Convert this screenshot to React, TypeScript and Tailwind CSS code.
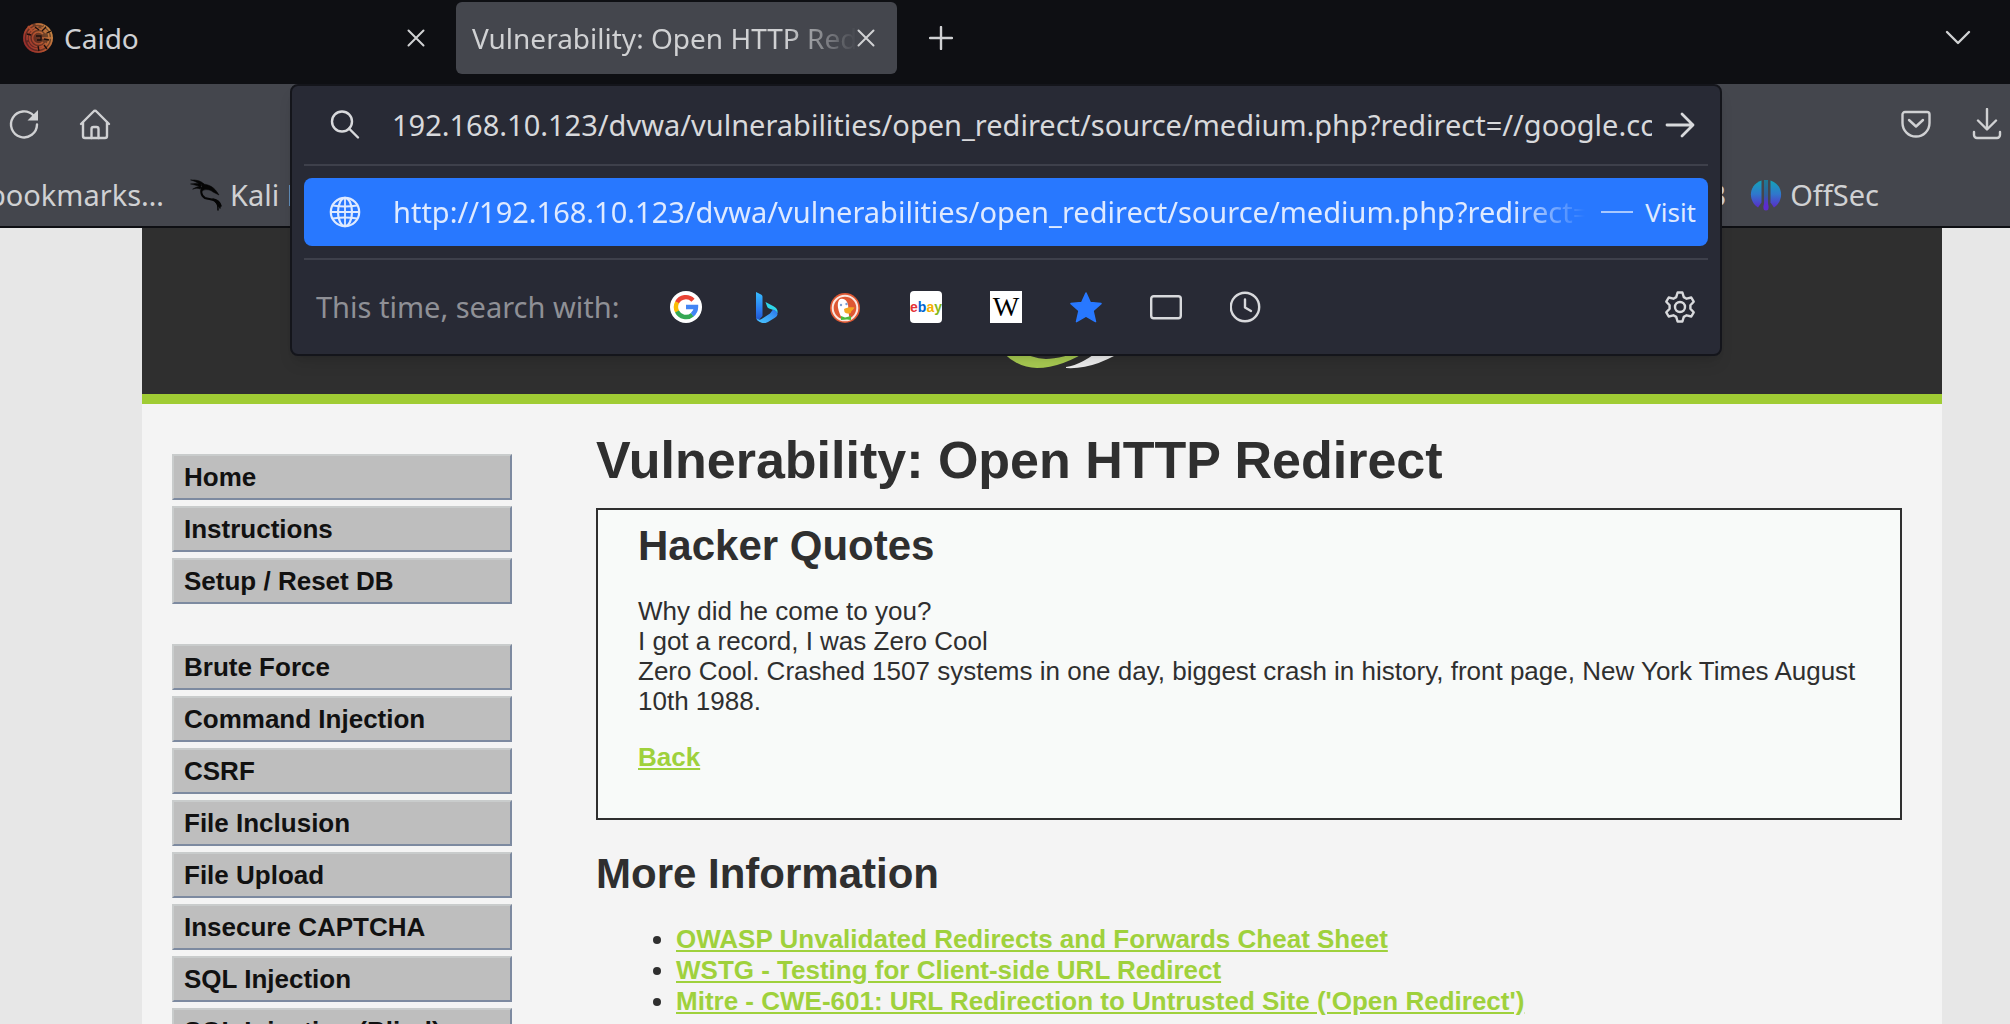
import type { ReactNode } from "react";

const ui = "font-['Noto_Sans',sans-serif]";
const page = "font-['Liberation_Sans',Arial,sans-serif]";

function Close() {
  return (
    <svg width="18" height="18" viewBox="0 0 18 18" fill="none" stroke="currentColor" strokeWidth="2" strokeLinecap="round">
      <path d="M1.5 1.5l15 15M16.5 1.5l-15 15" />
    </svg>
  );
}

function CaidoLogo() {
  return (
    <svg width="32" height="32" viewBox="0 0 32 32" fill="none">
      <defs>
        <linearGradient id="caido" x1="2" y1="24" x2="30" y2="8" gradientUnits="userSpaceOnUse">
          <stop stopColor="#94292b" />
          <stop offset="0.5" stopColor="#b5532f" />
          <stop offset="1" stopColor="#c98a45" />
        </linearGradient>
      </defs>
      <circle cx="16" cy="16" r="15" fill="url(#caido)" opacity="0.55" />
      <g stroke="url(#caido)" strokeWidth="1.6">
        <circle cx="16" cy="16" r="14" strokeDasharray="60 3 8 3" />
        <circle cx="16" cy="16" r="11" strokeDasharray="30 2 20 3" />
        <path d="M24 11a9 9 0 1 0 0 10" />
        <path d="M21 12a6 6 0 1 0 0 8" />
        <path d="M6 4l4 5M23 3l-2 5M20 16h11" />
      </g>
      <path d="M13 5l4 3M5 12l4 1M16 24l1 5M22 23l3 4M25 11l4-2M14 14h5v4h-4M22 17l5 1M20 9l4-4" stroke="#1b0f0e" strokeWidth="1.3" />
    </svg>
  );
}

function KaliIcon() {
  return (
    <svg width="32" height="32" viewBox="0 0 32 32" fill="none" stroke="#050505" strokeLinecap="round" strokeLinejoin="round">
      <path d="M1 1c6-.5 10 1 13 4l-4 1C7 3 4 2 1 1zM1 5c4-1 8-.5 11 1l-2 2C7 6 4 6 1 5zM3 10c3-2 6-3 9-2l-2 2C8 9 6 9 3 10z" fill="#050505" strokeWidth="0.5" />
      <path d="M12 5c5 0 11 2 15 8l2 3-6-3c-4-3-8-3-11-1" fill="#050505" strokeWidth="0.5" />
      <path d="M13 8c-3 3-2 9 2 11 5 2 11 0 14 8" strokeWidth="2" />
      <path d="M23 20c5 1 7 3 8 7M25 22c3 3 3 5 3 9M27 23c2 2 3 4 3 6" strokeWidth="1.5" />
    </svg>
  );
}

function OffSecIcon() {
  return (
    <svg width="32" height="32" viewBox="0 0 32 32">
      <defs>
        <linearGradient id="offsec" x1="0" y1="0" x2="0" y2="1">
          <stop stopColor="#14a3b8" />
          <stop offset="0.5" stopColor="#2f78cc" />
          <stop offset="1" stopColor="#5a2cc8" />
        </linearGradient>
        <linearGradient id="offsec-mid" x1="0" y1="0" x2="0" y2="32" gradientUnits="userSpaceOnUse">
          <stop stopColor="#1d7d94" />
          <stop offset="0.5" stopColor="#2f5f9c" />
          <stop offset="0.8" stopColor="#5d2bd0" />
        </linearGradient>
      </defs>
      <path d="M11.5 1.5v22L8 28.500C-2 22-2 6 11.500 1.500z" fill="url(#offsec)" />
      <path d="M20.500 1.500v22L24 28.500C34 22 34 6 20.500 1.500z" fill="url(#offsec)" />
      <path d="M14 1h4v23c0 2 1 3 .5 5a2.500 2.500 0 0 1-5 0c-.5-2 .5-3 .5-5z" fill="url(#offsec-mid)" />
    </svg>
  );
}

function Reload() {
  return (
    <svg width="32" height="32" viewBox="0 0 32 32" fill="none" stroke="currentColor" strokeWidth="2.4">
      <path d="M25.500 7.500A13 13 0 1 0 29 16.500" strokeLinecap="round" />
      <path d="M30 2v10.500H19.500z" fill="currentColor" stroke="none" />
    </svg>
  );
}

function HomeIcon() {
  return (
    <svg width="32" height="32" viewBox="0 0 32 32" fill="none" stroke="currentColor" strokeWidth="2.4" strokeLinecap="round" strokeLinejoin="round">
      <path d="M2 16L14.500 3.500a2 2 0 0 1 3 0L30 16" />
      <path d="M4 14.500V28a2 2 0 0 0 2 2h20a2 2 0 0 0 2-2V14.500" />
      <path d="M12.500 30V21a2 2 0 0 1 2-2h3a2 2 0 0 1 2 2v9" />
    </svg>
  );
}

function PocketIcon() {
  return (
    <svg width="32" height="32" viewBox="0 0 32 32" fill="none" stroke="currentColor" strokeWidth="2.4" strokeLinecap="round" strokeLinejoin="round">
      <path d="M5 4h22a2.500 2.500 0 0 1 2.500 2.500V15a13.500 13.500 0 0 1-27 0V6.500A2.500 2.500 0 0 1 5 4z" />
      <path d="M9 12l7 6.500 7-6.500" />
    </svg>
  );
}

function DownloadIcon() {
  return (
    <svg width="32" height="32" viewBox="0 0 32 32" fill="none" stroke="currentColor" strokeWidth="2.400" strokeLinecap="round" strokeLinejoin="round">
      <path d="M16 1v20M7 12.500l9 9 9-9" />
      <path d="M3 24v3a3 3 0 0 0 3 3h20a3 3 0 0 0 3-3v-3" />
    </svg>
  );
}

function SearchIcon() {
  return (
    <svg width="32" height="32" viewBox="0 0 32 32" fill="none" stroke="currentColor" strokeWidth="2.400" strokeLinecap="round">
      <circle cx="14" cy="12.500" r="10" />
      <path d="M21 19.500l9 9" />
    </svg>
  );
}

function GlobeIcon() {
  return (
    <svg width="32" height="32" viewBox="0 0 32 32" fill="none" stroke="currentColor" strokeWidth="2.200">
      <circle cx="16" cy="16" r="14.200" />
      <ellipse cx="16" cy="16" rx="7" ry="14.200" />
      <path d="M16 2v28M2 16h28" strokeWidth="1.800" />
      <path d="M4 9.500q12 2 24 0M4 22.500q12-2 24 0" strokeWidth="1.800" />
    </svg>
  );
}

function GoogleIcon() {
  return (
    <svg width="32" height="32" viewBox="0 0 32 32" fill="none" strokeWidth="4.400">
      <circle cx="16" cy="16" r="16" fill="#fff" />
      <path d="M7 11.500A10 10 0 0 1 23 9.200" stroke="#ea4335" />
      <path d="M7.200 11.200a10 10 0 0 0 0 9.600" stroke="#fbbc05" />
      <path d="M7 20.500A10 10 0 0 0 22.400 23.700" stroke="#34a853" />
      <path d="M16 16h10a10 10 0 0 1-3.800 7.800" stroke="#4285f4" />
    </svg>
  );
}

function BingIcon() {
  return (
    <svg width="32" height="32" viewBox="0 0 32 32">
      <defs>
        <linearGradient id="bing-stem" x1="0" y1="0" x2="0" y2="1">
          <stop stopColor="#37bdff" />
          <stop offset="0.600" stopColor="#2a7bf0" />
          <stop offset="1" stopColor="#2052cb" />
        </linearGradient>
        <linearGradient id="bing-bowl" x1="0" y1="1" x2="1" y2="0">
          <stop stopColor="#49c8ff" />
          <stop offset="0.600" stopColor="#3a9bf5" />
          <stop offset="1" stopColor="#2870ea" />
        </linearGradient>
      </defs>
      <path d="M6 1l5 2.500c1 .6 1.500 1.400 1.500 2.500v19L8 30c-1.500-1-2-2.500-2-4.500z" fill="url(#bing-stem)" />
      <path d="M15.500 11l8 4.200c3.500 2 4.500 4 4 7-1.500-2.500-4-3-8.500-4.700-1-.4-1.500-1-2-2.200z" fill="#2fd6e8" />
      <path d="M6.500 27c1.500 2 3.500 2 5 1l8.500-5.500 3-4c3.500 1 4.800 3 4.500 5-.3 1.500-1.500 2.500-3 3.500l-6.500 4c-2.500 1.500-5 1.500-7.500.3C8 30.500 7 29 6.500 27z" fill="url(#bing-bowl)" />
    </svg>
  );
}

function DuckIcon() {
  return (
    <svg width="32" height="32" viewBox="0 0 32 32">
      <circle cx="15" cy="17" r="15" fill="#de5833" />
      <circle cx="15" cy="17" r="12.300" fill="#de5833" stroke="#fbe6df" strokeWidth="2" />
      <path d="M9 9c2-2 6-1.500 8 2 2 4 1 7 1.500 10l1 7c-3 1.500-6 1.200-8-.2-.5-3-3-7-3.500-11-.3-3-.4-5 1-7.800z" fill="#fff" />
      <circle cx="11" cy="14" r="1.200" fill="#7d9fd0" />
      <circle cx="16.500" cy="13" r="1.200" fill="#7d9fd0" />
      <path d="M14 18c3-2 7-2 10.500-1.500-1 2.500-3.500 3-3.500 5 0 1.500-5 1.500-6.500-.5z" fill="#f5a623" />
      <path d="M11 25l4 1.500 6-1.500v4l-4-.5-6 .5z" fill="#4cba3c" />
    </svg>
  );
}

function EbayIcon() {
  return (
    <span className="flex size-8 items-center justify-center overflow-hidden rounded-sm bg-white font-['Liberation_Sans',sans-serif] text-sm leading-none font-bold">
      <span className="text-[#e53238]">e</span>
      <span className="text-[#0064d2]">b</span>
      <span className="text-[#f5af02]">a</span>
      <span className="text-[#86b817]">y</span>
    </span>
  );
}

function WikipediaIcon() {
  return (
    <span className="flex size-8 items-center justify-center bg-white font-['Liberation_Serif',serif] text-[28px] leading-none text-black">
      W
    </span>
  );
}

function StarIcon() {
  return (
    <svg width="32" height="32" viewBox="0 0 32 32" fill="#2878ff" stroke="#2878ff" strokeWidth="1.500" strokeLinejoin="round">
      <path d="M16 2l4.300 9.600 10.700 1-8 7 2.500 11L16 25.200 6.500 30.600 9 19.600l-8-7 10.700-1z" />
    </svg>
  );
}

function WindowIcon() {
  return (
    <svg width="32" height="32" viewBox="0 0 32 32" fill="none" stroke="currentColor" strokeWidth="2.400">
      <rect x="1.200" y="5.200" width="29.600" height="22" rx="2.500" />
    </svg>
  );
}

function ClockIcon() {
  return (
    <svg width="32" height="32" viewBox="0 0 32 32" fill="none" stroke="currentColor" strokeWidth="2.400" strokeLinecap="round" strokeLinejoin="round">
      <circle cx="15" cy="16" r="14.200" />
      <path d="M15 8.500v8l6 3.500" />
    </svg>
  );
}

function GearIcon() {
  return (
    <svg width="32" height="32" viewBox="0 0 32 32" fill="none" stroke="currentColor" strokeWidth="2.400" strokeLinejoin="round">
      <path d="M13.600 1.500h4.800l1.400 4.600 2.800 1.600 4.700-1.200 2.400 4.200-3.300 3.600v3.400l3.300 3.600-2.400 4.200-4.700-1.200-2.800 1.600-1.400 4.600h-4.800l-1.400-4.600-2.800-1.600-4.700 1.200-2.400-4.200 3.300-3.600v-3.400L2.300 10.700l2.400-4.200 4.700 1.200 2.800-1.600z" />
      <circle cx="16" cy="16" r="5" />
    </svg>
  );
}

const engines: { name: string; icon: ReactNode }[] = [
  { name: "Google", icon: <GoogleIcon /> },
  { name: "Bing", icon: <BingIcon /> },
  { name: "DuckDuckGo", icon: <DuckIcon /> },
  { name: "eBay", icon: <EbayIcon /> },
  { name: "Wikipedia", icon: <WikipediaIcon /> },
  { name: "Bookmarks", icon: <StarIcon /> },
  { name: "Tabs", icon: <WindowIcon /> },
  { name: "History", icon: <ClockIcon /> },
];

function TabStrip() {
  return (
    <div className="flex h-[84px] shrink-0 items-start bg-[#0e0f13] pt-[2px] text-[28px]">
      <div className="flex h-[72px] w-[456px] items-center pr-[31px] pl-[22px]">
        <CaidoLogo />
        <span className="ml-[10px] flex-1">Caido</span>
        <button aria-label="Close Caido"><Close /></button>
      </div>
      <div className="flex h-[72px] w-[441px] items-center rounded-md bg-[#44464d] pr-[22px] pl-4">
        <span className="flex-1 overflow-hidden [mask-image:linear-gradient(to_right,black_81%,transparent)] whitespace-nowrap">
          Vulnerability: Open HTTP Redirect
        </span>
        <button aria-label="Close tab"><Close /></button>
      </div>
      <button aria-label="New tab" className="flex h-[72px] w-[88px] items-center justify-center">
        <svg width="24" height="24" viewBox="0 0 24 24" fill="none" stroke="currentColor" strokeWidth="2.400" strokeLinecap="round">
          <path d="M12 1v22M1 12h22" />
        </svg>
      </button>
      <button aria-label="List all tabs" className="mr-[38px] ml-auto flex h-[72px] items-center">
        <svg width="28" height="16" viewBox="0 0 28 16" fill="none" stroke="currentColor" strokeWidth="2.400" strokeLinecap="round" strokeLinejoin="round">
          <path d="M3 2l11 11L25 2" />
        </svg>
      </button>
    </div>
  );
}

function Toolbar() {
  return (
    <div className="h-[144px] shrink-0 border-b-2 border-[#0e0f13] bg-[#44464d]">
      <div className="flex h-20 items-center gap-[39px] pr-[7px] pl-2">
        <button aria-label="Reload"><Reload /></button>
        <button aria-label="Home"><HomeIcon /></button>
        <button aria-label="Save to Pocket" className="ml-auto"><PocketIcon /></button>
        <button aria-label="Downloads"><DownloadIcon /></button>
      </div>
      <nav aria-label="Bookmarks" className="flex h-[62px] items-center whitespace-nowrap">
        <div className="flex w-[190px] shrink-0 justify-end pr-[26px]">
          <a href="#import">Import bookmarks…</a>
        </div>
        <a href="#kali" className="flex items-center gap-2">
          <KaliIcon />
          Kali Linux
        </a>
        <a href="#ghdb" className="ml-auto">Google Hacking DB</a>
        <a href="#offsec" className="mr-[131px] ml-6 flex items-center gap-2">
          <OffSecIcon />
          OffSec
        </a>
      </nav>
    </div>
  );
}

function UrlPopup() {
  return (
    <div className="absolute top-[84px] right-[288px] left-[290px] rounded-lg border-2 border-[#14151b] bg-[#282a35] px-3 text-[#d8d9dc] shadow-lg">
      <div className="flex h-[78px] items-center pr-3 pl-6">
        <SearchIcon />
        <input
          aria-label="Search or enter address"
          defaultValue="192.168.10.123/dvwa/vulnerabilities/open_redirect/source/medium.php?redirect=//google.com"
          className="mr-3 ml-8 min-w-0 flex-1 bg-transparent outline-none"
        />
        <button aria-label="Go">
          <svg width="32" height="28" viewBox="0 0 32 28" fill="none" stroke="currentColor" strokeWidth="2.800" strokeLinecap="round" strokeLinejoin="round">
            <path d="M3 14h26M18 3l11 11-11 11" />
          </svg>
        </button>
      </div>
      <div className="border-t-2 border-[#3e404b] py-3">
        <a href="#visit" className="flex h-[68px] items-center rounded-lg bg-[#2878ff] px-3 pl-[25px] text-[#dfeaff]">
          <GlobeIcon />
          <span className="ml-8 min-w-0 flex-1 overflow-hidden [mask-image:linear-gradient(to_right,black_94%,transparent)] whitespace-nowrap">
            http://192.168.10.123/dvwa/vulnerabilities/open_redirect/source/medium.php?redirect=//google.com
          </span>
          <span className="ml-4 flex items-center gap-3 text-[26px]">
            <span className="h-[2px] w-8 bg-[#a9c9ff]" />
            Visit
          </span>
        </a>
      </div>
      <div className="flex h-24 items-center border-t-2 border-[#3e404b] px-3">
        <span className="w-[354px] shrink-0 whitespace-nowrap text-[#8f9096]">This time, search with:</span>
        <div className="flex gap-12">
          {engines.map((e) => (
            <button key={e.name} aria-label={e.name}>{e.icon}</button>
          ))}
        </div>
        <button aria-label="Search settings" className="ml-auto"><GearIcon /></button>
      </div>
    </div>
  );
}

const menu = [
  ["Home", "Instructions", "Setup / Reset DB"],
  ["Brute Force", "Command Injection", "CSRF", "File Inclusion", "File Upload", "Insecure CAPTCHA", "SQL Injection", "SQL Injection (Blind)"],
];

const links = [
  "OWASP Unvalidated Redirects and Forwards Cheat Sheet",
  "WSTG - Testing for Client-side URL Redirect",
  "Mitre - CWE-601: URL Redirection to Untrusted Site ('Open Redirect')",
];

function DvwaPage() {
  return (
    <div className={`${page} min-h-0 flex-1 overflow-hidden bg-[#e7e7e7] pr-[68px] pl-[142px] text-[26px] leading-[30px] text-[#2f2f2f]`}>
      <div className="min-h-full bg-[#f4f4f4]">
        <header className="flex h-[176px] items-end justify-center border-b-10 border-[#a0cc34] bg-[#2f2f2f] pb-6">
          <svg width="200" height="40" viewBox="942 329 200 40" role="img" aria-label="DVWA">
            <path d="M990 335Q1010 367 1037 367Q1062 367 1092 347Q1060 358 1046 358Q1030 358 1012 345Z" fill="#a9cc52" />
            <path d="M1066 366Q1082 364 1105 345L1130 345Q1096 369 1066 367Z" fill="#f0f0f0" />
          </svg>
        </header>
        <div className="flex">
          <nav aria-label="Main menu" className="w-[424px] shrink-0 pt-[50px] pr-[54px] pl-[30px]">
            {menu.map((group, i) => (
              <ul key={i} className="mb-[40px] flex flex-col gap-[6px]">
                {group.map((item) => (
                  <li key={item}>
                    <a
                      href="#menu"
                      className="block h-[46px] border-2 border-t-[#c9cccc] border-r-[#7d8aa0] border-b-[#7d8aa0] border-l-[#c9cccc] bg-[#bebebe] px-[10px] py-[6px] font-bold text-[#111111]"
                    >
                      {item}
                    </a>
                  </li>
                ))}
              </ul>
            ))}
          </nav>
          <main className="min-w-0 flex-1 pt-[26px] pr-10 pl-[30px]">
            <h1 className="text-[52px] leading-[60px] font-bold">Vulnerability: Open HTTP Redirect</h1>
            <section className="mt-[18px] h-[312px] border-2 border-[#2f2f2f] bg-[#f8faf9] px-10 pt-[14px]">
              <h2 className="text-[42px] leading-[44px] font-bold">Hacker Quotes</h2>
              <p className="mt-7">
                Why did he come to you?
                <br />
                I got a record, I was Zero Cool
                <br />
                Zero Cool. Crashed 1507 systems in one day, biggest crash in history, front page, New York Times August 10th 1988.
              </p>
              <p className="mt-[26px]">
                <a href="#back" className="font-bold text-[#9fd13c] underline">Back</a>
              </p>
            </section>
            <h2 className="mt-8 text-[42px] leading-[44px] font-bold">More Information</h2>
            <ul className="mt-[28px] list-disc pl-20">
              {links.map((l) => (
                <li key={l} className="leading-[31px]">
                  <a href="#info" className="font-bold text-[#9fd13c] underline">{l}</a>
                </li>
              ))}
            </ul>
          </main>
        </div>
      </div>
    </div>
  );
}

export default function App() {
  return (
    <div className={`${ui} relative flex h-screen flex-col overflow-hidden bg-[#e7e7e7] text-[29px] text-[#d0d1d3]`}>
      <TabStrip />
      <Toolbar />
      <DvwaPage />
      <UrlPopup />
    </div>
  );
}
